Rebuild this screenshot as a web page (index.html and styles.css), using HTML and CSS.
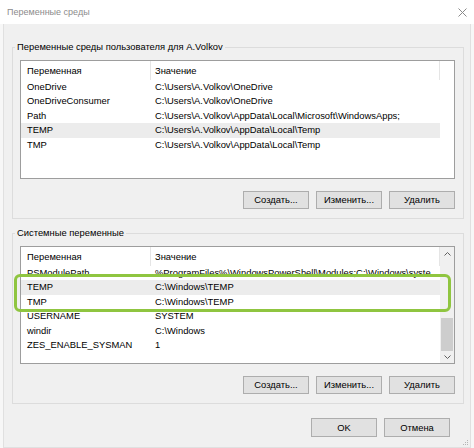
FILE: index.html
```html
<!DOCTYPE html>
<html lang="ru">
<head>
<meta charset="utf-8">
<title>Переменные среды</title>
<link rel="stylesheet" href="styles.css">
</head>
<body>
<div class="dialog">
  <div class="titlebar">
    <span class="title">Переменные среды</span>
    <svg class="close" width="9" height="9" viewBox="0 0 9 9"><path d="M0.5 0.5L8.5 8.5M8.5 0.5L0.5 8.5" stroke="#8a8a8a" stroke-width="1" fill="none"/></svg>
  </div>
  <div class="client">
    <fieldset class="group">
      <legend>Переменные среды пользователя для A.Volkov</legend>
      <div class="group-body">
        <div class="listview user">
          <div class="lv-main">
            <div class="lv-header"><div class="cell-name">Переменная</div><div class="cell-value">Значение</div></div>
            <div class="lv-row"><div class="cell-name">OneDrive</div><div class="cell-value">C:\Users\A.Volkov\OneDrive</div></div>
            <div class="lv-row"><div class="cell-name">OneDriveConsumer</div><div class="cell-value">C:\Users\A.Volkov\OneDrive</div></div>
            <div class="lv-row"><div class="cell-name">Path</div><div class="cell-value">C:\Users\A.Volkov\AppData\Local\Microsoft\WindowsApps;</div></div>
            <div class="lv-row sel"><div class="cell-name">TEMP</div><div class="cell-value">C:\Users\A.Volkov\AppData\Local\Temp</div></div>
            <div class="lv-row"><div class="cell-name">TMP</div><div class="cell-value">C:\Users\A.Volkov\AppData\Local\Temp</div></div>
          </div>
          <div class="lv-rest"></div>
        </div>
        <div class="buttons">
          <button class="btn">Создать...</button>
          <button class="btn">Изменить...</button>
          <button class="btn">Удалить</button>
        </div>
      </div>
    </fieldset>
    <fieldset class="group">
      <legend>Системные переменные</legend>
      <div class="group-body">
        <div class="listview sys">
          <div class="lv-main">
            <div class="lv-header"><div class="cell-name">Переменная</div><div class="cell-value">Значение</div></div>
            <div class="lv-row"><div class="cell-name">PSModulePath</div><div class="cell-value">%ProgramFiles%\WindowsPowerShell\Modules;C:\Windows\syste</div></div>
            <div class="lv-row sel"><div class="cell-name">TEMP</div><div class="cell-value">C:\Windows\TEMP</div></div>
            <div class="lv-row"><div class="cell-name">TMP</div><div class="cell-value">C:\Windows\TEMP</div></div>
            <div class="lv-row"><div class="cell-name">USERNAME</div><div class="cell-value">SYSTEM</div></div>
            <div class="lv-row"><div class="cell-name">windir</div><div class="cell-value">C:\Windows</div></div>
            <div class="lv-row"><div class="cell-name">ZES_ENABLE_SYSMAN</div><div class="cell-value">1</div></div>
          </div>
          <div class="lv-scroll">
            <div class="sb-arrow up"><svg width="7" height="4" viewBox="0 0 7 4"><path d="M0.5 3.5L3.5 0.5L6.5 3.5" stroke="#606060" stroke-width="1" fill="none"/></svg></div>
            <div class="sb-track"></div>
            <div class="sb-thumb"></div>
            <div class="sb-arrow down"><svg width="7" height="4" viewBox="0 0 7 4"><path d="M0.5 0.5L3.5 3.5L6.5 0.5" stroke="#606060" stroke-width="1" fill="none"/></svg></div>
          </div>
        </div>
        <div class="buttons">
          <button class="btn">Создать...</button>
          <button class="btn">Изменить...</button>
          <button class="btn">Удалить</button>
        </div>
      </div>
    </fieldset>
    <div class="footer">
      <button class="btn tall">OK</button>
      <button class="btn tall">Отмена</button>
    </div>
    <svg class="grip" width="7" height="7" viewBox="0 0 7 7"><g fill="#b4b4b4"><rect x="5" y="1" width="1" height="1"/><rect x="3" y="3" width="1" height="1"/><rect x="5" y="3" width="1" height="1"/><rect x="1" y="5" width="1" height="1"/><rect x="3" y="5" width="1" height="1"/><rect x="5" y="5" width="1" height="1"/></g></svg>
  </div>
  <div class="mark"></div>
</div>
</body>
</html>
```
FILE: styles.css
```css
html, body {
  margin: 0;
  padding: 0;
}
body {
  width: 474px;
  height: 448px;
  overflow: hidden;
  background: #f7f7f7;
  font-family: "Liberation Sans", Arial, sans-serif;
  font-size: 9.4px;
  color: #000;
}
.dialog {
  position: relative;
  width: 474px;
  height: 448px;
}
.titlebar {
  height: 24px;
  background: #fff;
  display: flex;
  align-items: center;
  justify-content: space-between;
  padding: 0 7px;
  box-sizing: border-box;
}
.title {
  color: #8c8c8c;
  font-size: 9px;
}
.close {
  display: block;
}
.client {
  position: relative;
  box-sizing: border-box;
  margin: 0 3px;
  height: 424px;
  background: #f0f0f0;
  border: 1px solid #e0e0e0;
  border-top: 0;
  padding: 16px 0 0 8px;
}
.group {
  margin: 0;
  padding: 0;
  width: 452px;
  min-width: 0;
  box-sizing: border-box;
  border: 1px solid #dcdcdc;
}
.group + .group {
  margin-top: 7px;
}
.group legend {
  padding: 0 2px;
  margin-left: 2px;
  height: 14px;
  line-height: 14px;
  color: #000;
}
.group-body {
  padding: 6px 8px 9px 7px;
}
.listview {
  display: flex;
  box-sizing: border-box;
  background: #fff;
  border: 1px solid #9d9d9d;
  height: 119px;
}
.listview.sys {
  height: 118px;
}
.lv-main {
  width: 419px;
  flex: none;
}
.lv-rest {
  flex: 1;
}
.lv-header,
.lv-row {
  display: flex;
  white-space: nowrap;
}
.lv-header {
  height: 19px;
}
.lv-header .cell-name,
.lv-header .cell-value {
  display: flex;
  align-items: center;
  border-right: 1px solid #e5e5e5;
}
.lv-row {
  height: 14.4px;
  line-height: 14.4px;
}
.lv-row.sel {
  background: #ececec;
}
.cell-name {
  width: 130px;
  flex: none;
  box-sizing: border-box;
  padding-left: 6px;
  overflow: hidden;
}
.cell-value {
  flex: 1;
  min-width: 0;
  padding-left: 4px;
  overflow: hidden;
}
.lv-scroll {
  flex: 1;
  background: #f0f0f0;
  display: flex;
  flex-direction: column;
  align-items: center;
}
.sb-arrow {
  display: flex;
  align-items: center;
  justify-content: center;
  width: 100%;
}
.sb-arrow.up {
  height: 13px;
}
.sb-arrow.down {
  height: 12px;
}
.sb-arrow svg {
  display: block;
}
.sb-track {
  flex: 1;
}
.sb-thumb {
  width: 12px;
  height: 33px;
  background: #cdcdcd;
}
.buttons {
  display: flex;
  justify-content: flex-end;
  gap: 7px;
  margin-top: 12px;
}
.btn {
  width: 66px;
  height: 18px;
  box-sizing: border-box;
  margin: 0;
  padding: 0;
  border: 1px solid #adadad;
  background: #e1e1e1;
  font-family: inherit;
  font-size: inherit;
  color: #000;
  line-height: 14px;
}
.btn.tall {
  height: 19px;
}
.footer {
  display: flex;
  justify-content: flex-end;
  gap: 7px;
  margin-top: 14px;
  padding-right: 20px;
}
.grip {
  position: absolute;
  right: 1px;
  bottom: 1px;
}
.mark {
  position: absolute;
  left: 14px;
  top: 274px;
  width: 437px;
  height: 38px;
  box-sizing: border-box;
  border: 3px solid #8fc540;
  border-radius: 6px;
}
```
